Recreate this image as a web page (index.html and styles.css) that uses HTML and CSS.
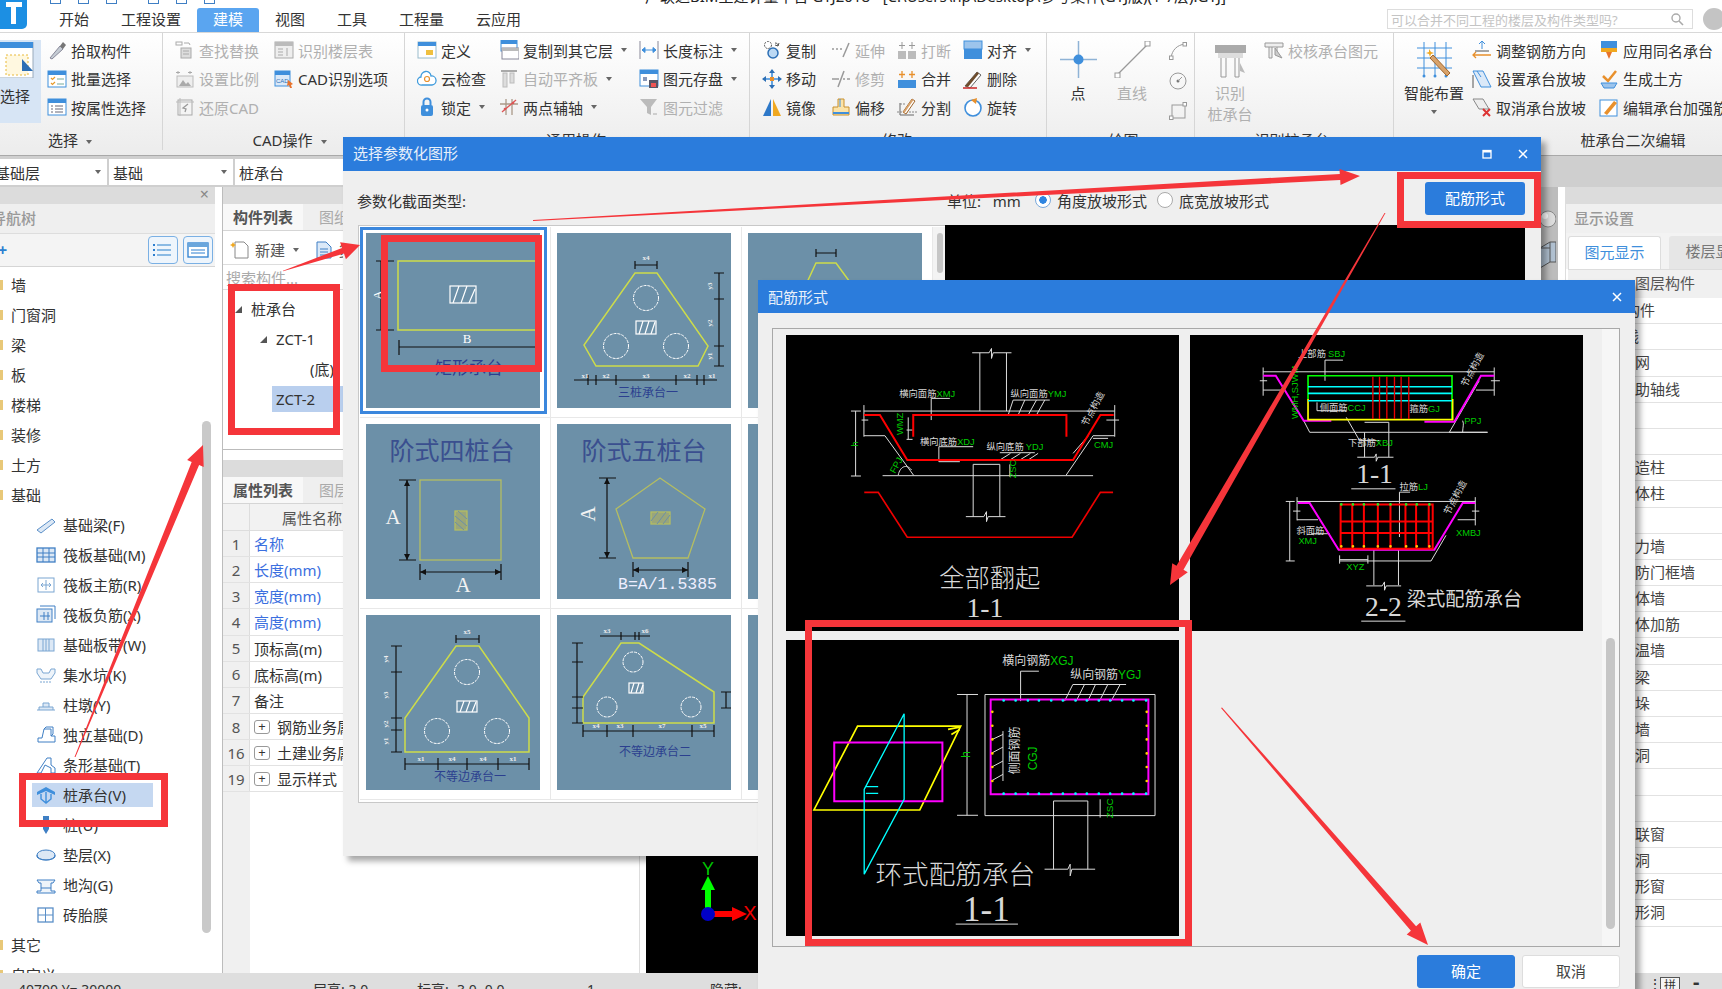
FILE: index.html
```
<!DOCTYPE html>
<html lang="zh">
<head>
<meta charset="utf-8">
<title>广联达BIM土建计量平台</title>
<link rel="stylesheet" href="styles.css">
</head>
<body>
<div class="app">
  <header class="top">
    <div class="logo"><svg viewBox="0 0 27 30" width="27" height="30"><rect x="-4" y="-6" width="31" height="35" rx="5" fill="#1c8fe3"/><path d="M6 2H22V7H16V24H11V7H6Z" fill="#fff"/></svg></div>
    <div class="topright">
      <div class="titlebar">
        <div class="qa"><i></i><i></i><i></i><i class="qa-w"></i><i></i><i></i></div>
        <span class="apptitle">广联达BIM土建计量平台 GTJ2018 - [C:\Users\hp\Desktop\参考案件(GTJ版)(1-7层).GTJ]</span>
      </div>
      <div class="tabbar">
        <nav class="tabs">
          <span class="tab">开始</span><span class="tab">工程设置</span><span class="tab on">建模</span><span class="tab">视图</span><span class="tab">工具</span><span class="tab">工程量</span><span class="tab">云应用</span>
        </nav>
        <div class="searchbox"><span>可以合并不同工程的楼层及构件类型吗?</span><svg viewBox="0 0 14 14" width="14" height="14"><circle cx="6" cy="6" r="4" fill="none" stroke="#aaa" stroke-width="1.4"/><path d="M9 9l4 4" stroke="#aaa" stroke-width="1.6"/></svg></div>
        <div class="avatar"></div>
      </div>
    </div>
  </header>

  <section class="ribbon">
    <div class="group g1">
      <div class="rbody">
        <div class="selbtn">
          <svg viewBox="0 0 34 36" width="34" height="36"><rect x="-3" y="0" width="36" height="36" fill="#fff" stroke="#9ab" stroke-width="1"/><rect x="-3" y="0" width="36" height="6" fill="#3f8fdc"/><rect x="6" y="13" width="22" height="20" fill="#fff8e0" stroke="#e8b93a" stroke-dasharray="2 2"/><path d="M22 17L33 29H22Z" fill="#2d6fb5"/></svg>
          <span>选择</span>
        </div>
        <div class="col w-a">
          <div class="item"><svg class="ic" viewBox="0 0 20 20"><path d="M3 18L13 6l3 3L5 19Z" fill="#c5ccd4" stroke="#889"/><path d="M13 6l3-4 3 3-3 4Z" fill="#777"/></svg><span>拾取构件</span></div>
          <div class="item"><svg class="ic" viewBox="0 0 20 20"><rect x="1" y="2" width="18" height="16" fill="#fff" stroke="#3f8fdc"/><rect x="1" y="2" width="18" height="4" fill="#3f8fdc"/><path d="M4 9l1.500 1.500L8 8M4 14l1.500 1.500L8 13" fill="none" stroke="#e89a2c" stroke-width="1.2"/><path d="M10 10h7M10 15h7" stroke="#7a9" stroke-width="1.2"/></svg><span>批量选择</span></div>
          <div class="item"><svg class="ic" viewBox="0 0 20 20"><rect x="1" y="2" width="18" height="16" fill="#fff" stroke="#3f8fdc"/><rect x="1" y="2" width="18" height="4" fill="#3f8fdc"/><path d="M4 9h2M8 9h8M4 12h2M8 12h8M4 15h2M8 15h8" stroke="#667" stroke-width="1"/></svg><span>按属性选择</span></div>
        </div>
      </div>
      <div class="rlabel l-sel">选择<b class="caret"></b></div>
    </div>

    <div class="group g2">
      <div class="rbody">
        <div class="col w-b off">
          <div class="item"><svg class="ic" viewBox="0 0 20 20"><rect x="1" y="2" width="6" height="3" fill="none" stroke="#aaa"/><path d="M9 3h5l1 2" fill="none" stroke="#aaa"/><rect x="6" y="8" width="10" height="10" fill="#ddd" stroke="#aaa"/><path d="M8 11h6M8 14h6" stroke="#aaa"/></svg><span>查找替换</span></div>
          <div class="item"><svg class="ic" viewBox="0 0 20 20"><path d="M3 2v3M1 3.500h4M15 2v3M13 3.500h4" stroke="#aaa"/><rect x="2" y="7" width="16" height="11" fill="#eee" stroke="#bbb"/><path d="M4 17l4-6 3 4 2-2 3 4Z" fill="#aaa"/></svg><span>设置比例</span></div>
          <div class="item"><svg class="ic" viewBox="0 0 20 20"><rect x="3" y="3" width="14" height="15" fill="#f4f4f4" stroke="#aaa"/><path d="M1 5h18M5 1v18" stroke="#bbb"/><path d="M13 7l-5 4 3 1-1 3" fill="none" stroke="#999" stroke-width="1.300"/></svg><span>还原CAD</span></div>
        </div>
        <div class="col">
          <div class="item off"><svg class="ic" viewBox="0 0 20 20"><rect x="1" y="2" width="18" height="16" fill="#eee" stroke="#aaa"/><rect x="1" y="2" width="18" height="4" fill="#bbb"/><path d="M4 9h5M4 12h5M4 15h5M13 8v8" stroke="#aaa"/></svg><span>识别楼层表</span></div>
          <div class="item"><svg class="ic" viewBox="0 0 20 20"><rect x="1" y="2" width="15" height="15" fill="#dbe9f8" stroke="#3f8fdc"/><rect x="1" y="2" width="15" height="4" fill="#3f8fdc"/><text class="ictext" x="2" y="14">CAD</text><path d="M14 11l5 4-2 1 1 3h-2l-1-3-2 1Z" fill="#e8732c"/></svg><span>CAD识别选项</span></div>
        </div>
      </div>
      <div class="rlabel">CAD操作<b class="caret"></b></div>
    </div>

    <div class="group g3">
      <div class="rbody">
        <div class="col w-c">
          <div class="item"><svg class="ic" viewBox="0 0 20 20"><rect x="1" y="2" width="18" height="16" fill="#fff" stroke="#9bc"/><rect x="1" y="2" width="18" height="4" fill="#3f8fdc"/><rect x="9" y="10" width="7" height="5" fill="#f0c040"/></svg><span>定义</span></div>
          <div class="item"><svg class="ic" viewBox="0 0 20 20"><path d="M5 16a4 4 0 0 1-1-8 5 5 0 0 1 10-1 4.500 4.500 0 0 1 1 9Z" fill="#fff" stroke="#3f9bdc" stroke-width="1.300"/><circle cx="10" cy="10" r="2.500" fill="none" stroke="#e8902c" stroke-width="1.200"/></svg><span>云检查</span></div>
          <div class="item"><svg class="ic" viewBox="0 0 20 20"><rect x="4" y="8" width="12" height="11" rx="2" fill="#3f8fdc"/><path d="M6.500 8V5a3.500 3.500 0 0 1 7 0v3" fill="none" stroke="#3f8fdc" stroke-width="2"/><circle cx="10" cy="13" r="1.500" fill="#fff"/></svg><span>锁定</span><b class="caret"></b></div>
        </div>
        <div class="col w-d">
          <div class="item"><svg class="ic" viewBox="0 0 20 20"><rect x="2" y="0" width="16" height="11" fill="#fff" stroke="#3f8fdc"/><rect x="2" y="0" width="16" height="4" fill="#3f8fdc"/><rect x="3" y="8" width="17" height="11" fill="#fff" stroke="#889"/><rect x="3" y="8" width="17" height="3" fill="#bbb"/></svg><span>复制到其它层</span><b class="caret"></b></div>
          <div class="item off"><svg class="ic" viewBox="0 0 20 20"><path d="M2 2H18" stroke="#aaa" stroke-width="2"/><rect x="4" y="4" width="4" height="14" fill="#ddd" stroke="#bbb"/><rect x="11" y="4" width="4" height="10" fill="#ddd" stroke="#bbb"/></svg><span>自动平齐板</span><b class="caret"></b></div>
          <div class="item"><svg class="ic" viewBox="0 0 20 20"><path d="M7 2V18M13 2V18M1 7H19" stroke="#a98" stroke-width="1.300"/><path d="M3 15L17 3" stroke="#d55" stroke-width="1.300"/><circle cx="6" cy="12" r="1.300" fill="#d55"/><circle cx="14" cy="6" r="1.300" fill="#d55"/></svg><span>两点辅轴</span><b class="caret"></b></div>
        </div>
        <div class="col">
          <div class="item"><svg class="ic" viewBox="0 0 20 20"><path d="M1 1V19M19 1V19" stroke="#889"/><path d="M3 10H17M3 10l3-2.500v5ZM17 10l-3-2.500v5Z" fill="#3f8fdc" stroke="#3f8fdc"/></svg><span>长度标注</span><b class="caret"></b></div>
          <div class="item"><svg class="ic" viewBox="0 0 20 20"><rect x="1" y="1" width="18" height="16" fill="#fff" stroke="#3f8fdc"/><rect x="1" y="1" width="18" height="4" fill="#3f8fdc"/><rect x="4" y="8" width="4" height="4" fill="#89b"/><rect x="10" y="11" width="9" height="8" fill="#556"/><rect x="12" y="14" width="5" height="4" fill="#e55"/></svg><span>图元存盘</span><b class="caret"></b></div>
          <div class="item off"><svg class="ic" viewBox="0 0 20 20"><path d="M1 2H18L12 10V18L8 16V10Z" fill="#bbb"/><path d="M14 17h4" stroke="#aaa"/></svg><span>图元过滤</span></div>
        </div>
      </div>
      <div class="rlabel">通用操作<b class="caret"></b></div>
    </div>

    <div class="group g4">
      <div class="rbody">
        <div class="col w-e">
          <div class="item"><svg class="ic" viewBox="0 0 20 20"><circle cx="6" cy="5" r="3.500" fill="#fff" stroke="#555" stroke-dasharray="2 1"/><circle cx="11" cy="13" r="5" fill="#bcd9f4" stroke="#2d6fb5" stroke-width="1.500"/><path d="M13 3c2 0 3 1 3 3M13 5l3 1 1-3" fill="none" stroke="#555"/></svg><span>复制</span></div>
          <div class="item"><svg class="ic" viewBox="0 0 20 20"><path d="M10 1v18M1 10h18" stroke="#3f8fdc" stroke-width="1.600"/><path d="M10 0l3 4H7ZM10 20l3-4H7ZM0 10l4 3V7ZM20 10l-4 3V7Z" fill="#2d6fb5"/><rect x="8" y="8" width="4" height="4" fill="#e8902c"/></svg><span>移动</span></div>
          <div class="item"><svg class="ic" viewBox="0 0 20 20"><path d="M9 2V19H1Z" fill="#2d78c8"/><path d="M11 2V19H19Z" fill="#f0a820"/></svg><span>镜像</span></div>
        </div>
        <div class="col w-f">
          <div class="item off"><svg class="ic" viewBox="0 0 20 20"><path d="M1 9H3M5 9H7M9 9H11" stroke="#999" stroke-width="1.500"/><path d="M12 17L18 3" stroke="#999" stroke-width="1.500"/></svg><span>延伸</span></div>
          <div class="item off"><svg class="ic" viewBox="0 0 20 20"><path d="M1 10H8M12 10H14M16 10H19" stroke="#999" stroke-width="1.500"/><path d="M7 18L13 2" stroke="#999" stroke-width="1.500"/></svg><span>修剪</span></div>
          <div class="item"><svg class="ic" viewBox="0 0 20 20"><path d="M7 2H13V10H18V18H2V10H7Z" fill="#fbe3a8" stroke="#c8902c"/><path d="M2 16H18" stroke="#3f8fdc" stroke-width="2"/><path d="M9 2V10" stroke="#3f8fdc"/></svg><span>偏移</span></div>
        </div>
        <div class="col w-f">
          <div class="item off"><svg class="ic" viewBox="0 0 20 20"><rect x="1" y="11" width="8" height="8" fill="#bbb"/><rect x="11" y="11" width="8" height="8" fill="#bbb"/><path d="M5 2v7M2 5.500h6M15 2v7M12 5.500h6" stroke="#999"/></svg><span>打断</span></div>
          <div class="item"><svg class="ic" viewBox="0 0 20 20"><rect x="1" y="11" width="18" height="8" fill="#3f8fdc"/><path d="M5 2v7M2 5.500h6M15 2v7M12 5.500h6" stroke="#e8902c" stroke-width="1.300"/></svg><span>合并</span></div>
          <div class="item"><svg class="ic" viewBox="0 0 20 20"><path d="M3 6V18H17" fill="none" stroke="#666"/><path d="M0 15H20M3 7L9 7" stroke="#888" stroke-dasharray="2 1"/><path d="M6 15L15 2l3 2L9 17Z" fill="#fff" stroke="#a0662c"/><path d="M6 15l9-13 1.500 1L7.500 16Z" fill="#d8a26a"/></svg><span>分割</span></div>
        </div>
        <div class="col">
          <div class="item"><svg class="ic" viewBox="0 0 20 20"><rect x="1" y="1" width="18" height="8" fill="#9cc4ec" stroke="#3f8fdc"/><rect x="1" y="9" width="18" height="10" fill="#3f8fdc"/></svg><span>对齐</span><b class="caret"></b></div>
          <div class="item"><svg class="ic" viewBox="0 0 20 20"><path d="M2 17L14 3l4 3L7 19Z" fill="#fff" stroke="#666"/><path d="M2 17l12-14 2 1.500L5 18Z" fill="#6d4c2c"/><path d="M0 19H14" stroke="#c33" stroke-width="1.600"/></svg><span>删除</span></div>
          <div class="item"><svg class="ic" viewBox="0 0 20 20"><circle cx="10" cy="11" r="8" fill="#fff" stroke="#3f8fdc" stroke-width="1.600"/><path d="M8 3l6-2-1 6Z" fill="#e8902c"/></svg><span>旋转</span></div>
        </div>
      </div>
      <div class="rlabel">修改<b class="caret"></b></div>
    </div>

    <div class="group g5">
      <div class="rbody">
        <div class="big">
          <svg viewBox="0 0 37 37" width="37" height="37"><path d="M18.500 0V37M0 18.500H37" stroke="#8fb3d6" stroke-width="1.500"/><circle cx="18.500" cy="18.500" r="5" fill="#3f8fdc"/></svg>
          <span>点</span>
        </div>
        <div class="big off">
          <svg viewBox="0 0 37 37" width="37" height="37"><path d="M3 34L34 3" stroke="#999" stroke-width="1.200"/><rect x="1" y="32" width="5" height="5" fill="#fff" stroke="#999"/><rect x="31" y="0" width="5" height="5" fill="#fff" stroke="#999"/></svg>
          <span>直线</span>
        </div>
        <div class="tools3">
          <svg viewBox="0 0 18 18" width="18" height="18"><path d="M2 16C3 8 8 3 16 2" fill="none" stroke="#999"/><rect x="0.500" y="14" width="3.500" height="3.500" fill="#fff" stroke="#999"/><rect x="14" y="0.500" width="3.500" height="3.500" fill="#fff" stroke="#999"/></svg>
          <svg viewBox="0 0 18 18" width="18" height="18"><circle cx="9" cy="9" r="8" fill="none" stroke="#999"/><circle cx="9" cy="9" r="1.500" fill="#777"/><path d="M9 9l4-4" stroke="#999"/></svg>
          <svg viewBox="0 0 18 18" width="18" height="18"><rect x="3" y="3" width="13" height="13" fill="none" stroke="#999"/><rect x="0.500" y="14" width="3.500" height="3.500" fill="#fff" stroke="#999"/><rect x="14" y="0.500" width="3.500" height="3.500" fill="#fff" stroke="#999"/></svg>
        </div>
      </div>
      <div class="rlabel">绘图</div>
    </div>

    <div class="group g6">
      <div class="rbody">
        <div class="big off wide2">
          <svg viewBox="0 0 37 37" width="37" height="37"><rect x="3" y="4" width="31" height="8" fill="#aaa"/><rect x="6" y="12" width="25" height="5" fill="#ddd"/><path d="M9 17V36H14V17M23 17V36H27V17" fill="none" stroke="#999"/><path d="M28 22l5 10-5-2Z" fill="#bbb"/></svg>
          <span>识别<br>桩承台</span>
        </div>
        <div class="col">
          <div class="item off"><svg class="ic" viewBox="0 0 20 20"><path d="M1 3H19V7H1ZM5 7V18H8V7M13 7V15" fill="#eee" stroke="#999"/><path d="M11 8l7 10-7-3Z" fill="#ccc" stroke="#999"/></svg><span>校核承台图元</span></div>
        </div>
      </div>
      <div class="rlabel">识别桩承台<b class="caret"></b></div>
    </div>

    <div class="group g7">
      <div class="rbody">
        <div class="big wide3">
          <svg viewBox="0 0 37 37" width="37" height="37"><path d="M8 1V35M19 1V35M30 1V35M1 7H36M1 17H36M1 27H36" stroke="#3f8fdc" stroke-width="1"/><circle cx="8" cy="35" r="1.500" fill="#3f8fdc"/><circle cx="19" cy="35" r="1.500" fill="#3f8fdc"/><circle cx="30" cy="35" r="1.500" fill="#3f8fdc"/><path d="M14 17l3-3 17 18-3 3Z" fill="#d8a26a" stroke="#a0662c"/><path d="M13 8l2 3 3 1-3 1-1 3-1-3-3-1 3-1Z" fill="#f0a820"/></svg>
          <span>智能布置</span><b class="caret"></b>
        </div>
        <div class="col w-g">
          <div class="item"><svg class="ic" viewBox="0 0 20 20"><path d="M10 1V9M7 4l3-3 3 3" fill="none" stroke="#3f8fdc"/><path d="M3 11H17" stroke="#888" stroke-width="1.500"/><path d="M1 15H19M4 18l-3-3 3-3" fill="none" stroke="#e8902c" stroke-width="1.300"/></svg><span>调整钢筋方向</span></div>
          <div class="item"><svg class="ic" viewBox="0 0 20 20"><path d="M1 2H11L19 18H9Z" fill="#dbe9f8" stroke="#3f8fdc"/><path d="M5 2L9 8" stroke="#3f8fdc"/><path d="M1 19V6" stroke="#555"/></svg><span>设置承台放坡</span></div>
          <div class="item"><svg class="ic" viewBox="0 0 20 20"><path d="M1 2H11L17 12H7Z" fill="#eee" stroke="#888"/><path d="M11 12l7 7M18 12l-7 7" stroke="#d33" stroke-width="2"/></svg><span>取消承台放坡</span></div>
        </div>
        <div class="col">
          <div class="item"><svg class="ic" viewBox="0 0 20 20"><rect x="2" y="1" width="16" height="7" fill="#3f8fdc"/><rect x="2" y="8" width="16" height="4" fill="#f0a820"/><path d="M7 12h6l-3 7Z" fill="#e8732c"/></svg><span>应用同名承台</span></div>
          <div class="item"><svg class="ic" viewBox="0 0 20 20"><path d="M4 7l5 5 8-10" fill="none" stroke="#e8902c" stroke-width="2.500"/><path d="M2 14H18L15 19H5Z" fill="#9cc4ec" stroke="#3f8fdc"/></svg><span>生成土方</span></div>
          <div class="item"><svg class="ic" viewBox="0 0 20 20"><rect x="1" y="3" width="17" height="16" fill="#fff" stroke="#3f8fdc"/><path d="M5 16L15 4l3 2L8 18Z" fill="#e8902c"/></svg><span>编辑承台加强筋</span></div>
        </div>
      </div>
      <div class="rlabel">桩承台二次编辑</div>
    </div>
  </section>

  <section class="combos">
    <div class="combo c1"><span>基础层</span><b class="caret"></b></div>
    <div class="combo c2"><span>基础</span><b class="caret"></b></div>
    <div class="combo c3"><span>桩承台</span><b class="caret"></b></div>
  </section>

  <main class="main">
    <aside class="nav">
      <div class="strip"><span class="xmark">×</span></div>
      <div class="navtitle"><span>导航树</span></div>
      <div class="navtool">
        <span class="plus">+</span>
        <span class="navbtn"><svg viewBox="0 0 24 18" width="24" height="18"><path d="M6 4H20M6 9H20M6 14H20" stroke="#6aa6dc" stroke-width="1.500"/><path d="M2 4H4M2 9H4M2 14H4" stroke="#2d7fd0" stroke-width="2"/></svg></span>
        <span class="navbtn"><svg viewBox="0 0 24 18" width="24" height="18"><rect x="2" y="2" width="20" height="14" fill="#fff" stroke="#2d7fd0" stroke-width="1.300"/><rect x="2" y="2" width="20" height="4" fill="#6aa6dc"/><path d="M5 9H19M5 12H19" stroke="#2d7fd0"/></svg></span>
      </div>
      <ul class="tree">
        <li class="fold">墙</li>
        <li class="fold">门窗洞</li>
        <li class="fold">梁</li>
        <li class="fold">板</li>
        <li class="fold">楼梯</li>
        <li class="fold">装修</li>
        <li class="fold">土方</li>
        <li class="fold">基础</li>
        <li class="leaf"><svg viewBox="0 0 20 20"><path d="M1 15L16 4l3 3L5 18Z" fill="#dce8f5" stroke="#5a8fc8"/></svg>基础梁(F)</li>
        <li class="leaf"><svg viewBox="0 0 20 20"><rect x="1" y="3" width="18" height="14" fill="#dce8f5" stroke="#3f7fc4" stroke-width="1.300"/><path d="M1 8H19M1 12H19M7 3V17M13 3V17" stroke="#3f7fc4"/></svg>筏板基础(M)</li>
        <li class="leaf"><svg viewBox="0 0 20 20"><rect x="2" y="3" width="16" height="14" fill="#fff" stroke="#7ba6d2"/><path d="M10 5V15M5 10H15M7 8l-2 2 2 2M13 8l2 2-2 2" fill="none" stroke="#7ba6d2"/></svg>筏板主筋(R)</li>
        <li class="leaf"><svg viewBox="0 0 20 20"><rect x="1" y="4" width="15" height="13" fill="#dce8f5" stroke="#3f7fc4"/><path d="M4 1H19V14" fill="none" stroke="#3f7fc4"/><path d="M8 7V15M12 7V15M4 11H14" stroke="#3f7fc4"/></svg>筏板负筋(X)</li>
        <li class="leaf"><svg viewBox="0 0 20 20"><rect x="2" y="4" width="16" height="12" fill="#dce8f5" stroke="#7ba6d2"/><path d="M7 4V16M13 4V16M10 4V16" stroke="#7ba6d2"/></svg>基础板带(W)</li>
        <li class="leaf"><svg viewBox="0 0 20 20"><path d="M1 4H5L7 8H13L15 4H19V8L15 14H5L1 8Z" fill="#eef4fa" stroke="#7ba6d2"/><path d="M4 17H16" stroke="#7ba6d2" stroke-dasharray="2 1"/></svg>集水坑(K)</li>
        <li class="leaf"><svg viewBox="0 0 20 20"><path d="M1 15H19M3 15V12H17V15M7 12V8H13V12" fill="#dce8f5" stroke="#7ba6d2"/></svg>柱墩(Y)</li>
        <li class="leaf"><svg viewBox="0 0 20 20"><path d="M2 17V13H6L8 4H15V11H19V17ZM8 4l2-2H17V9l-2 2" fill="#fff" stroke="#3f7fc4"/></svg>独立基础(D)</li>
        <li class="leaf"><svg viewBox="0 0 20 20"><path d="M1 18L5 12L11 3H15V10L19 13V18H15V13L9 10L5 18Z" fill="#fff" stroke="#3f7fc4"/></svg>条形基础(T)</li>
        <li class="leaf sel"><svg viewBox="0 0 20 20"><path d="M10 2L19 7V10L10 6L1 10V7Z" fill="#3f8fdc"/><path d="M5 9V14L10 18L15 14V9M10 7V18" fill="none" stroke="#3f8fdc" stroke-width="1.400"/></svg>桩承台(V)</li>
        <li class="leaf"><svg viewBox="0 0 20 20"><rect x="7" y="1" width="6" height="13" fill="#3f7fc4"/><path d="M7 14H13L10 19Z" fill="#3f7fc4"/></svg>桩(U)</li>
        <li class="leaf"><svg viewBox="0 0 20 20"><ellipse cx="10" cy="10" rx="9" ry="5" fill="#dce8f5" stroke="#3f7fc4"/><path d="M1 10V12C3 16 17 16 19 12V10" fill="none" stroke="#3f7fc4"/></svg>垫层(X)</li>
        <li class="leaf"><svg viewBox="0 0 20 20"><path d="M1 5H19L17 8H15V16H19V18H1V16H5V8H3Z" fill="#eef4fa" stroke="#3f7fc4"/><path d="M5 13H15" stroke="#3f7fc4"/></svg>地沟(G)</li>
        <li class="leaf"><svg viewBox="0 0 20 20"><rect x="2" y="3" width="15" height="14" fill="#fff" stroke="#5a8fc8" stroke-width="1.300"/><path d="M9.500 3V17M2 10H17" stroke="#5a8fc8"/></svg>砖胎膜</li>
        <li class="fold">其它</li>
        <li class="fold">自定义</li>
      </ul>
      <div class="navscroll"></div>
    </aside>

    <section class="comp">
      <div class="strip"></div>
      <div class="ptabs"><span class="ptab on">构件列表</span><span class="ptab">图纸管理</span></div>
      <div class="comptool">
        <svg viewBox="0 0 20 20" width="20" height="20"><path d="M5 2H14L18 6V18H5Z" fill="#fff" stroke="#888"/><path d="M3 2l1 2 2 1-2 1-1 2-1-2-2-1 2-1Z" fill="#f0a820"/></svg>
        <span>新建</span><b class="caret"></b>
        <svg class="ctool2" viewBox="0 0 20 20" width="20" height="20"><path d="M3 2H12L17 7V18H3Z" fill="#dbe9f8" stroke="#3f7fc4"/><path d="M6 9H14M6 12H14M6 15H14" stroke="#3f7fc4"/></svg>
        <span>复制</span>
      </div>
      <div class="compsearch">搜索构件...</div>
      <div class="comptree">
        <div class="tr lv0"><i class="tri"></i>桩承台</div>
        <div class="tr lv1"><i class="tri"></i>ZCT-1</div>
        <div class="tr lv3">(底)</div>
        <div class="tr lv2 sel">ZCT-2</div>
      </div>
      <div class="gap"></div>
      <div class="strip"></div>
      <div class="ptabs"><span class="ptab on">属性列表</span><span class="ptab">图层管理</span></div>
      <div class="ptable">
        <div class="phead"><span class="pidx"></span><span class="pname ctr">属性名称</span></div>
        <div class="prow"><span class="pidx">1</span><span class="pname blue">名称</span></div>
        <div class="prow"><span class="pidx">2</span><span class="pname blue">长度(mm)</span></div>
        <div class="prow"><span class="pidx">3</span><span class="pname blue">宽度(mm)</span></div>
        <div class="prow"><span class="pidx">4</span><span class="pname blue">高度(mm)</span></div>
        <div class="prow"><span class="pidx">5</span><span class="pname">顶标高(m)</span></div>
        <div class="prow"><span class="pidx">6</span><span class="pname">底标高(m)</span></div>
        <div class="prow"><span class="pidx">7</span><span class="pname">备注</span></div>
        <div class="prow"><span class="pidx">8</span><span class="pname"><i class="pbox">+</i>钢筋业务属性</span></div>
        <div class="prow"><span class="pidx">16</span><span class="pname"><i class="pbox">+</i>土建业务属性</span></div>
        <div class="prow"><span class="pidx">19</span><span class="pname"><i class="pbox">+</i>显示样式</span></div>
      </div>
    </section>

    <section class="viewport">
      <svg class="axes" viewBox="0 0 60 70" width="60" height="70"><path d="M14 48V22" stroke="#0f0" stroke-width="6"/><path d="M14 10L21 24H7Z" fill="#0f0"/><path d="M14 48H42" stroke="#f00" stroke-width="6"/><path d="M53 48L38 41V55Z" fill="#f00"/><circle cx="14" cy="48" r="7" fill="#0000c8"/><text class="ax-y" x="14" y="9">Y</text><text class="ax-x" x="56" y="54">X</text></svg>
    </section>

    <div class="viewtools">
      <svg viewBox="0 0 18 20" width="18" height="20"><circle cx="10" cy="9" r="8" fill="#ddd" stroke="#888"/><circle cx="7" cy="6" r="3" fill="#fff"/></svg>
      <svg viewBox="0 0 18 30" width="18" height="30"><path d="M2 8L12 2V22L2 28ZM2 8H12M12 2H18V22H12" fill="#b0c0d0" stroke="#555"/></svg>
    </div>

    <aside class="right">
      <div class="strip"></div>
      <div class="rtitle">显示设置</div>
      <div class="rtabs"><span class="rtab on">图元显示</span><span class="rtab">楼层显示</span></div>
      <div class="rtable">
        <div class="rhead">图层构件</div>
        <div class="rr l0">所有构件</div>
        <div class="rr l3">轴线</div>
        <div class="rr l2">轴网</div>
        <div class="rr l2">辅助轴线</div>
        <div class="rr l1">柱</div>
        <div class="rr l1">柱</div>
        <div class="rr l2">构造柱</div>
        <div class="rr l2">砌体柱</div>
        <div class="rr l1">墙</div>
        <div class="rr l2">剪力墙</div>
        <div class="rr l2">人防门框墙</div>
        <div class="rr l2">砌体墙</div>
        <div class="rr l2">砌体加筋</div>
        <div class="rr l2">保温墙</div>
        <div class="rr l2">暗梁</div>
        <div class="rr l2">墙垛</div>
        <div class="rr l2">幕墙</div>
        <div class="rr l2">门洞</div>
        <div class="rr l1">门</div>
        <div class="rr l1">窗</div>
        <div class="rr l2">门联窗</div>
        <div class="rr l2">墙洞</div>
        <div class="rr l2">带形窗</div>
        <div class="rr l2">带形洞</div>
      </div>
    </aside>
  </main>

  <footer class="status">
    <span class="s-xy">40700 Y= 30000</span>
    <span class="s-a">层高: 3.0</span>
    <span class="s-b">标高: -3.0~0.0</span>
    <span class="s-c">1</span>
    <span class="s-d">隐藏:</span>
    <span class="s-e">⋮</span>
    <span class="s-f">拼</span>
    <span class="s-g">-</span>
  </footer>

  <div class="dialog d1">
    <div class="dtitle"><span>选择参数化图形</span>
      <svg class="dmax" viewBox="0 0 10 10" width="10" height="10"><rect x="1" y="1.500" width="8" height="7.500" fill="none" stroke="#fff" stroke-width="1.300"/><path d="M1 2.500H9" stroke="#fff" stroke-width="2"/></svg>
      <svg class="dclose" viewBox="0 0 10 10" width="10" height="10"><path d="M1 1L9 9M9 1L1 9" stroke="#fff" stroke-width="1.500"/></svg>
    </div>
    <div class="d1head">
      <span class="d1label">参数化截面类型:</span>
      <span class="unit">单位: &nbsp;&nbsp;mm</span>
      <i class="radio on"></i><span>角度放坡形式</span>
      <i class="radio r2"></i><span>底宽放坡形式</span>
      <span class="pbtn">配筋形式</span>
    </div>
    <div class="d1body">
      <div class="gridframe">
        <div class="grid">
          <div class="cell sel"><svg class="thumb" viewBox="0 0 174 175">
            <path class="dim" d="M15 28V97M10 28H28M10 97H28M33 114H170M33 107V122"/>
            <rect class="yl" x="32" y="28" width="138" height="69"/>
            <g transform="translate(84 53)"><rect class="hw" width="26" height="17"/><path class="hw" d="M3 17L9 0M11 17L17 0M19 17L25 3"/></g>
            <text class="lw m" x="12" y="66" transform="rotate(-90 12 62)">A</text>
            <text class="lw m" x="101" y="110">B</text>
            <text class="tt m t17" x="103" y="141">矩形承台</text>
          </svg></div>
          <div class="cell"><svg class="thumb" viewBox="0 0 174 175">
            <polygon class="yl" points="78,40 100,40 151,113 141,133 39,133 27,112"/>
            <circle class="wc" cx="89" cy="65" r="12.500"/><circle class="wc" cx="59" cy="113" r="12.500"/><circle class="wc" cx="119" cy="113" r="12.500"/>
            <g transform="translate(79 88)"><rect class="hw" width="20" height="13"/><path class="hw" d="M3 13L7 0M9 13L13 0M15 13L19 1"/></g>
            <path class="dim" d="M78 32H100M78 28V36M100 28V36M162 40V133M157 40H167M157 66H167M157 113H167M157 133H167M17 147H160M31 142V152M39 142V152M59 142V152M119 142V152M140 142V152M147 142V152"/>
            <text class="mini m" x="89" y="27">x4</text><text class="mini m" x="28" y="145">x1</text><text class="mini m" x="49" y="145">x2</text><text class="mini m" x="89" y="145">x3</text><text class="mini m" x="130" y="145">x2</text><text class="mini m" x="155" y="145">x1</text>
            <text class="mini m" x="153" y="55" transform="rotate(-90 153 53)">y3</text><text class="mini m" x="153" y="92" transform="rotate(-90 153 90)">y2</text><text class="mini m" x="153" y="125" transform="rotate(-90 153 123)">y1</text>
            <text class="tt m t12" x="91" y="164">三桩承台一</text>
          </svg></div>
          <div class="cell"><svg class="thumb" viewBox="0 0 174 175">
            <polygon class="yl" points="68,30 88,30 148,112 148,133 30,133 30,112"/>
            <path class="dim" d="M68 20H88M68 16V24M88 16V24"/>
          </svg></div>
          <div class="cell"><svg class="thumb" viewBox="0 0 174 175">
            <text class="tt2 m" x="86" y="36">阶式四桩台</text>
            <rect class="ym" x="54" y="56" width="81" height="80"/>
            <g transform="translate(89 87)"><rect class="ym fy" width="12" height="19"/><path class="hy" d="M0 5L12 15M0 11L9 19M3 0L12 8"/></g>
            <path class="dim" d="M41 56V136M33 56H50M33 136H50M54 148H135M54 140V156M135 140V156"/>
            <path class="ah" d="M41 56l-3 6h6ZM41 136l-3-6h6ZM54 148l6-3v6ZM135 148l-6-3v6Z"/>
            <text class="lw2 m" x="27" y="100">A</text><text class="lw2 m" x="97" y="168">A</text>
          </svg></div>
          <div class="cell"><svg class="thumb" viewBox="0 0 174 175">
            <text class="tt2 m" x="87" y="36">阶式五桩台</text>
            <polygon class="ym" points="103,54 148,85 131,134 76,134 59,85"/>
            <g transform="translate(94 88)"><rect class="ym fy" width="19" height="12"/><path class="hy" d="M0 9L7 0M6 12L15 0M12 12L19 3"/></g>
            <path class="dim" d="M50 54V134M42 54H59M42 134H59M76 146H131M76 138V153M131 138V153"/>
            <path class="ah" d="M50 54l-3 6h6ZM50 134l-3-6h6ZM76 146l6-3v6ZM131 146l-6-3v6Z"/>
            <text class="lw2 m" x="32" y="96" transform="rotate(-90 32 90)">A</text>
            <text class="mono" x="61" y="165">B=A/1.5385</text>
          </svg></div>
          <div class="cell"><svg class="thumb"></svg></div>
          <div class="cell"><svg class="thumb" viewBox="0 0 174 175">
            <polygon class="yl" points="90,31 113,31 163,103 163,137 39,137 39,103"/>
            <circle class="wc" cx="101" cy="57" r="12.500"/><circle class="wc" cx="71" cy="116" r="12.500"/><circle class="wc" cx="131" cy="116" r="12.500"/>
            <g transform="translate(91 86)"><rect class="hw" width="20" height="11"/><path class="hw" d="M3 11L7 0M9 11L13 0M15 11L19 1"/></g>
            <path class="dim" d="M90 24H113M90 20V28M113 20V28M30 31V137M25 31H36M25 57H36M25 103H36M25 115H36M25 137H36M39 149H163M39 143V155M72 143V155M101 143V155M132 143V155M163 143V155"/>
            <text class="mini m" x="101" y="19">x5</text><text class="mini m" x="55" y="146">x1</text><text class="mini m" x="86" y="146">x4</text><text class="mini m" x="117" y="146">x4</text><text class="mini m" x="147" y="146">x1</text>
            <text class="mini m" x="20" y="46" transform="rotate(-90 20 44)">y4</text><text class="mini m" x="20" y="82" transform="rotate(-90 20 80)">y3</text><text class="mini m" x="20" y="111" transform="rotate(-90 20 109)">y2</text><text class="mini m" x="20" y="128" transform="rotate(-90 20 126)">y1</text>
            <text class="tt m t12" x="104" y="166">不等边承台一</text>
          </svg></div>
          <div class="cell"><svg class="thumb" viewBox="0 0 174 175">
            <polygon class="yl" points="64,28 82,28 157,77 157,108 26,108 26,82"/>
            <circle class="wc" cx="76" cy="47" r="10"/><circle class="wc" cx="50" cy="92" r="10"/><circle class="wc" cx="134" cy="92" r="10"/>
            <g transform="translate(72 68)"><rect class="hw" width="14" height="10"/><path class="hw" d="M2 10L5 0M7 10L10 0M11 10L14 2"/></g>
            <path class="dim" d="M43 21H93M64 17V25M78 17V25M82 17V25M20 28V108M15 28H26M15 47H26M15 82H26M15 93H26M15 108H26M26 116H157M26 110V122M50 110V122M76 110V122M135 110V122M157 110V122M169 77V93M164 77H174M164 93H174"/>
            <text class="mini m" x="50" y="18">x3</text><text class="mini m" x="88" y="18">x6</text><text class="mini m" x="39" y="113">x4</text><text class="mini m" x="63" y="113">x3</text><text class="mini m" x="105" y="113">x7</text><text class="mini m" x="146" y="113">x5</text>
            <text class="tt m t12" x="98" y="141">不等边承台二</text>
          </svg></div>
          <div class="cell"><svg class="thumb"></svg></div>
        </div>
        <div class="gscroll"><i></i></div>
      </div>
      <div class="preview"></div>
    </div>
  </div>

  <div class="dialog d2">
    <div class="dtitle"><span>配筋形式</span>
      <svg class="dclose2" viewBox="0 0 10 10" width="10" height="10"><path d="M1 1L9 9M9 1L1 9" stroke="#fff" stroke-width="1.500"/></svg>
    </div>
    <div class="d2frame">
      <div class="imgs">
        <svg class="cad" viewBox="78 165 1180 888">
          <path class="wl" d="M312 375V470M1065 375V470M312 393H1065M287 393V588M273 393H303M273 588H303M660 393V218M740 393V218M637 218H688L695 205V235L700 218H755M312 467H375L462 587H368M1065 467H1000L918 587H1000M462 587H918M640 587V553H720V710M640 587V710M618 710H672L680 695V725L685 710H737M750 553V590M440 450H458M440 478H458M445 412V478M514 355V420M537 500V545H600M514 355H570M537 500H640M760 360L745 405M795 360L775 405M830 360L805 405M855 360L830 405M760 360H870M752 520L720 540M782 520L750 540M812 520L780 540M835 520L805 540M720 518H825M1000 475H1045M415 585C420 560 440 550 455 570M985 468L940 520M1040 420H1078M305 420H325"/>
          <path class="rl" d="M312 405H360L442 540H940L1022 405H1062"/>
          <path class="rl" d="M460 470V405H920V470"/>
          <path class="rl2" d="M313 637H355L442 772H937L1022 637H1060"/>
          <text class="cw s26" x="418" y="350">横向面筋<tspan class="cg">XMJ</tspan></text>
          <text class="cw s26" x="752" y="352">纵向面筋<tspan class="cg">YMJ</tspan></text>
          <text class="cw s26" x="480" y="495">横向底筋<tspan class="cg">XDJ</tspan></text>
          <text class="cw s26" x="680" y="510">纵向底筋 <tspan class="cg">YDJ</tspan></text>
          <text class="cg s26" x="1003" y="505">CMJ</text>
          <text class="cg s26" x="428" y="465" transform="rotate(-90 428 465)">WMZ</text>
          <text class="cg s26" x="770" y="595" transform="rotate(-90 770 595)">ZSC</text>
          <text class="cg s26" x="405" y="582" transform="rotate(-60 405 582)">FPJ</text>
          <text class="cg s26" x="295" y="500" transform="rotate(-90 295 500)">h</text>
          <text class="cw s26" x="982" y="440" transform="rotate(-62 982 440)">节点构造</text>
          <text class="cw big75 m" x="690" y="920">全部翻起</text>
          <text class="cw one m" x="675" y="1010">1-1</text>
        </svg>
        <svg class="cad" viewBox="30 45 1182 885">
          <path class="wl" d="M250 153H945M250 140V225M945 140V225M240 180H262M935 180H962M250 208H305M945 208H890M390 335H925M390 335L372 300M925 335H810L900 180M555 335V410M628 305V410M555 305H628M533 410H585L590 400V422L595 410H642M515 505H648M436 118V180M436 118H490M412 270V245M412 270H500M500 290L540 360H600M850 300C855 310 850 320 850 335M352 543H888M352 530V600M888 530V615M340 572H362M878 572H900M352 598H415M888 598H835M330 543V722M318 543H345M318 722H345M480 722H755L800 645M480 705V730M565 705V730M480 718H565M583 688V795M657 688V795M583 688H657M560 797H608L615 785V810L620 797H665M545 903H678M660 515V650M660 515H692M395 640H450"/>
          <path class="ml" d="M250 165H288L372 300H455M735 303H825L905 165H945"/>
          <path class="gl" d="M385 235V165H818V298M385 235"/>
          <path class="yl2" d="M385 235V297H820V235"/>
          <path class="cl" d="M385 198H818M385 218H818M385 240H818"/>
          <path class="rl3" d="M580 168V295M600 168V295M622 168V295M645 168V295M665 168V295M688 168V295"/>
          <path class="ml" d="M355 548H390L477 688H765L850 548H888"/>
          <path class="rl" d="M483 552H760V685H483ZM518 552V685M553 552V685M595 552V685M633 552V685M678 552V685M710 552V685M748 552V685M483 603H760M483 638H760"/>
          <path class="dots-y" d="M485 678h.1M520 678h.1M553 678h.1M595 678h.1M633 678h.1M680 678h.1M712 678h.1M750 678h.1"/>
          <path class="dots-g" d="M485 552h.1M520 552h.1M553 552h.1M595 552h.1M633 552h.1M680 552h.1M712 552h.1M750 552h.1"/>
          <text class="cw s26" x="355" y="110">上部筋 <tspan class="cg">SBJ</tspan></text>
          <text class="cw s26" x="420" y="270">侧面筋<tspan class="cg">CCJ</tspan></text>
          <text class="cw s26" x="690" y="275">箍筋<tspan class="cg">GJ</tspan></text>
          <text class="cg s26" x="855" y="310">PPJ</text>
          <text class="cw s26" x="505" y="376">下部筋<tspan class="cg">XBJ</tspan></text>
          <text class="cw s26" x="660" y="510">拉筋<tspan class="cg">LJ</tspan></text>
          <text class="cw s26" x="350" y="640">斜面筋</text>
          <text class="cg s26" x="356" y="670">XMJ</text>
          <text class="cg s26" x="830" y="646">XMBJ</text>
          <text class="cg s26" x="500" y="748">XYZ</text>
          <text class="cg s26" x="355" y="295" transform="rotate(-90 355 295)">WMH,SJWM</text>
          <text class="cw s26" x="862" y="200" transform="rotate(-62 862 200)">节点构造</text>
          <text class="cw s26" x="810" y="585" transform="rotate(-62 810 585)">节点构造</text>
          <text class="cw one m" x="585" y="488">1-1</text>
          <text class="cw one m" x="612" y="887">2-2</text>
          <text class="cw s56" x="682" y="856">梁式配筋承台</text>
        </svg>
        <svg class="cad" viewBox="78 60 1181 882">
          <path class="yl3" d="M293 315H603L480 567H162Z"/>
          <path class="ml" d="M223 364H548V541H223Z"/>
          <path class="cl2" d="M433 278V535L313 760V505ZM318 497H355M318 517H355"/>
          <path class="yl3" d="M565 325L600 318M575 340L600 325"/>
          <path class="wl" d="M676 220H1187V584H676ZM622 220V583M592 220H655M592 583H655M882 584V540H985V745M882 584V745M855 745H925L932 730V765L937 745H1007M783 150V240M783 150H838M915 240L940 190M950 240L975 190M985 240L1008 190M1020 240L1045 190M1055 240L1082 190M940 190H1100M730 330V480M698 355L730 340M698 395L730 378M698 437L730 420M698 478L730 460M1022 535V590M588 910H775"/>
          <path class="ml" d="M693 235H1167V520H693Z"/>
          <path class="dots-c" d="M732 238h.1M768 238h.1M805 238h.1M838 238h.1M875 238h.1M910 238h.1M948 238h.1M982 238h.1M1018 238h.1M1052 238h.1M1088 238h.1M1122 238h.1M1160 238h.1M732 518h.1M768 518h.1M805 518h.1M838 518h.1M875 518h.1M910 518h.1M948 518h.1M982 518h.1M1018 518h.1M1052 518h.1M1088 518h.1M1122 518h.1M1160 518h.1"/>
          <path class="dots-y" d="M698 272h.1M698 314h.1M698 355h.1M698 397h.1M698 438h.1M698 480h.1M1162 272h.1M1162 314h.1M1162 355h.1M1162 397h.1M1162 438h.1M1162 480h.1"/>
          <text class="cw s36" x="728" y="130">横向钢筋<tspan class="cg">XGJ</tspan></text>
          <text class="cw s36" x="932" y="172">纵向钢筋<tspan class="cg">YGJ</tspan></text>
          <text class="cw s36" x="778" y="460" transform="rotate(-90 778 460)">侧面钢筋</text>
          <text class="cg s36" x="832" y="448" transform="rotate(-90 832 448)">CGJ</text>
          <text class="cg s30" x="1062" y="592" transform="rotate(-90 1062 592)">ZSC</text>
          <text class="cg s36" x="632" y="410" transform="rotate(-90 632 410)">h</text>
          <text class="cw s81" x="347" y="789">环式配筋承台</text>
          <text class="cw one2 m" x="680" y="900">1-1</text>
        </svg>
      </div>
      <div class="d2scroll"><i></i></div>
    </div>
    <div class="d2foot">
      <span class="btn pri">确定</span>
      <span class="btn">取消</span>
    </div>
  </div>

  <div class="rbox rb1"></div>
  <div class="rbox rb2"></div>
  <div class="rbox rb3"></div>
  <div class="rbox rb4"></div>
  <div class="rbox rb5"></div>

  <svg class="arrows" viewBox="0 0 1722 989" width="1722" height="989">
    <polygon points="75.500,757 199.100,465 203.700,466.900 203,445 187.100,460.100 191.700,462 74.500,757"/>
    <polygon points="283,271.300 344,253.600 345.900,259.300 360,245 340.100,242.300 342,248 283,270.700"/>
    <polygon points="533,221 1340.200,180 1340.500,185 1360,176 1339.500,169 1339.800,174 533,220"/>
    <polygon points="1385.500,213 1183.500,569.700 1187.800,572.200 1170,585 1172.200,563.200 1176.500,565.700 1384.500,213"/>
    <polygon points="1221,708 1410.900,930.800 1406.700,934.400 1428,945 1420.300,922.600 1416.100,926.200 1222,707.500"/>
  </svg>
</div>
</body>
</html>
```

FILE: styles.css
```
* { box-sizing: border-box; }
html, body { margin: 0; padding: 0; }
body { width: 1722px; height: 989px; overflow: hidden; background: #eee; font-family: "Noto Sans", "Noto Sans CJK SC", sans-serif; font-size: 15px; color: #333; }
ul { list-style: none; margin: 0; padding: 0; }
i, b { font-style: normal; font-weight: normal; }

.app { position: relative; width: 1722px; height: 989px; overflow: hidden; display: flex; flex-direction: column; }

.top { display: flex; height: 33px; background: #fff; border-bottom: 1px solid #d8d8d8; flex: none; }
.logo { width: 43px; flex: none; }
.logo svg { display: block; }
.topright { flex: 1; display: flex; flex-direction: column; }
.titlebar { height: 9px; overflow: hidden; display: flex; align-items: flex-end; position: relative; }
.qa { display: flex; gap: 17px; margin-left: 7px; height: 4px; align-self: flex-start; }
.qa i { width: 11px; height: 4px; border: 1px solid #3f7fc4; border-top: 0; }
.qa .qa-w { margin-left: 14px; }
.apptitle { position: absolute; left: 602px; top: -14px; font-size: 15px; line-height: 20px; white-space: nowrap; color: #222; }
.tabbar { flex: 1; display: flex; align-items: stretch; }
.tabs { display: flex; flex: none; }
.tab { padding: 0 16px; line-height: 23px; font-size: 15px; white-space: nowrap; }
.tab.on { background: #5aa5f0; color: #fff; border-radius: 3px 3px 0 0; }
.searchbox { margin: 1px 0 3px auto; width: 306px; height: 20px; border: 1px solid #ddd; display: flex; align-items: center; justify-content: space-between; padding: 0 8px 0 3px; font-size: 13px; color: #c4c4c4; background: #fff; }
.avatar { width: 22px; height: 22px; margin: 0 -3px 0 10px; border-radius: 50%; background: #c4c4c4; }

.ribbon { flex: none; height: 122px; display: flex; overflow: hidden; background: linear-gradient(#fff, #ececec); }
.group { flex: none; display: flex; flex-direction: column; border-right: 1px solid #d6d6d6; height: 117px; }
.g1 { width: 163px; }
.g2 { width: 242px; padding-left: 12px; }
.g3 { width: 345px; padding-left: 12px; }
.g4 { width: 297px; padding-left: 12px; }
.g5 { width: 148px; padding-left: 6px; }
.g6 { width: 199px; padding-left: 10px; }
.g7 { width: 468px; padding-left: 10px; border-right: 0; }
.rbody { height: 97px; flex: none; padding-top: 3px; display: flex; }
.rlabel { height: 20px; text-align: center; line-height: 20px; color: #333; font-size: 15px; }
.l-sel { padding-right: 22px; }
.col { flex: none; display: flex; flex-direction: column; }
.w-a { margin-left: 6px; }
.w-b { width: 99px; }
.w-c { width: 82px; }
.w-d { width: 140px; }
.w-e { width: 69px; }
.w-f { width: 66px; }
.w-g { width: 127px; }
.item { height: 28.6px; display: flex; align-items: center; white-space: nowrap; font-size: 15px; }
.ic { width: 20px; height: 20px; margin-right: 4px; flex: none; }
.ictext { font-size: 6px; fill: #2d6fb5; font-family: "Liberation Sans", sans-serif; }
.off span { color: #b0b0b0; }
.caret { display: inline-block; width: 0; height: 0; margin-left: 8px; border: 3.5px solid transparent; border-top: 4px solid #666; border-bottom: 0; vertical-align: middle; }
.selbtn { width: 41px; height: 83px; margin-top: 4px; background: #d7e5f5; display: flex; flex-direction: column; gap: 7px; overflow: hidden; }
.selbtn svg { display: block; margin-top: 2px; }
.big { width: 50px; display: flex; flex-direction: column; align-items: center; flex: none; margin-right: 4px; font-size: 15px; }
.big svg { margin-top: 5px; margin-bottom: 5px; }
.big span { line-height: 21px; text-align: center; }
.wide2 { width: 50px; margin-right: 9px; }
.wide3 { width: 60px; margin-right: 8px; }
.wide3 .caret { margin: 6px 0 0; }
.tools3 { margin: 0 0 0 8px; display: flex; flex-direction: column; gap: 12px; padding-top: 6px; }

.combos { flex: none; height: 32px; background: #cfcfcf; border-top: 1px solid #a9a9a9; display: flex; gap: 2px; padding-top: 3px; margin-top: 0; overflow: hidden; }
.combo { height: 26px; background: #fff; display: flex; align-items: center; justify-content: space-between; padding: 0 6px 0 4px; font-size: 15px; flex: none; }
.c1 { width: 107px; padding-left: 0; }
.c1 span { margin-left: -5px; }
.c2 { width: 124px; }
.c3 { width: 300px; }
.combo .caret { margin: 0; }

.main { flex: 1; display: flex; background: #fff; min-height: 0; }
.strip { height: 17px; background: #dcdcdc; flex: none; position: relative; }
.nav { width: 215px; flex: none; display: flex; flex-direction: column; position: relative; background: #fff; }
.xmark { position: absolute; right: 6px; top: -3px; color: #888; font-size: 16px; line-height: 20px; }
.navtitle { height: 29px; flex: none; background: #efefef; color: #999; font-weight: 500; padding-left: 0; line-height: 29px; overflow: hidden; }
.navtitle span { margin-left: -9px; }
.navtool { height: 34px; flex: none; background: #f4f4f4; border-top: 1px solid #ddd; border-bottom: 1px solid #d5d5d5; display: flex; align-items: center; padding-right: 2px; gap: 5px; }
.plus { margin-right: auto; color: #2d7fd0; font-weight: 700; font-size: 16px; line-height: 16px; margin-left: -2px; }
.navbtn { width: 30px; height: 28px; border: 1.500px solid #7ab0e4; border-radius: 4px; display: flex; align-items: center; justify-content: center; background: #eef5fc; }
.tree { padding-top: 3px; flex: 1; overflow: hidden; }
.tree li { height: 30px; line-height: 30px; font-size: 15px; white-space: nowrap; display: flex; align-items: center; }
.fold { padding-left: 11px; position: relative; }
.fold::before { content: ""; position: absolute; left: 0; top: 10px; width: 3px; height: 10px; background: #e8c878; }
.leaf { padding-left: 63px; position: relative; }
.leaf svg { position: absolute; left: 36px; top: 5px; width: 20px; height: 20px; }
.tree .leaf.sel { background: linear-gradient(#c5d8f1, #c5d8f1) 32px 3px / 121px 24px no-repeat; }
.navscroll { position: absolute; left: 202px; top: 234px; width: 9px; height: 512px; background: #c9c9c9; border-radius: 5px; }

.comp { width: 418px; flex: none; margin-left: 7px; border-left: 1px solid #bcbcbc; border-right: 1px solid #ddd; display: flex; flex-direction: column; background: #fff; }
.ptabs { height: 27px; flex: none; background: #efefef; display: flex; border-bottom: 1px solid #d5d5d5; }
.ptab { width: 80px; flex: none; text-align: center; line-height: 27px; font-size: 15px; color: #aaa; margin-right: 6px; }
.ptab.on { background: #f8f8f8; color: #555; font-weight: 700; margin-right: 6px; }
.comptool { height: 34px; flex: none; display: flex; align-items: center; padding: 4px 0 0 7px; border-bottom: 1px solid #ddd; gap: 5px; font-size: 15px; color: #555; }
.comptool .caret { margin-left: 3px; }
.ctool2 { margin-left: 10px; }
.compsearch { height: 25px; flex: none; padding: 2px 0 0 3px; color: #aaa; font-size: 15px; line-height: 23px; border-bottom: 1px solid #ddd; }
.comptree { height: 160px; flex: none; padding-top: 4px; border-bottom: 1px solid #bbb; }
.tr { height: 30px; line-height: 30px; position: relative; white-space: nowrap; font-size: 15px; }
.lv0 { padding-left: 28px; }
.lv1 { padding-left: 53px; }
.lv3 { padding-left: 87px; }
.lv2 { margin-left: 49px; padding-left: 4px; background: #b9cfee; height: 26px; line-height: 26px; margin-top: 2px; }
.tri { position: absolute; width: 0; height: 0; top: 12px; border-style: solid; border-width: 0 0 7px 7px; border-color: transparent transparent #555 transparent; }
.lv0 .tri { left: 12px; }
.lv1 .tri { left: 37px; }
.gap { height: 10px; flex: none; }
.ptable { flex: 1; background: linear-gradient(to right, #f0f0f0 27px, #fff 27px); overflow: hidden; }
.phead { height: 27px; display: flex; border-bottom: 1px solid #ddd; background: #f2f2f2; align-items: center; }
.prow { height: 26.15px; display: flex; align-items: center; border-bottom: 1px solid #e2e2e2; }
.pidx { width: 27px; flex: none; text-align: center; font-size: 15px; color: #555; align-self: stretch; display: flex; align-items: center; justify-content: center; border-right: 1px solid #ddd; }
.pname { width: 150px; flex: none; padding-left: 4px; font-size: 15px; white-space: nowrap; display: flex; align-items: center; }
.ctr { width: 124px; justify-content: center; color: #555; padding: 0; }
.blue { color: #3b6fe0; }
.pbox { width: 16px; height: 14px; border: 1px solid #999; border-radius: 3px; font-size: 13px; line-height: 11px; text-align: center; margin-right: 7px; color: #333; }

.viewport { width: 912px; flex: none; margin-left: 6px; background: #000; position: relative; }
.axes { position: absolute; left: 48px; bottom: 37px; overflow: visible; }
.ax-y { fill: #0c0; font: 18px "Liberation Sans", sans-serif; text-anchor: middle; }
.ax-x { fill: #e00; font: 20px "Liberation Sans", sans-serif; text-anchor: middle; }
.viewtools { width: 7px; flex: none; background: #fff; position: relative; }
.viewtools svg { position: absolute; left: -20px; }
.viewtools svg:first-child { top: 23px; }
.viewtools svg:last-child { top: 53px; }
.viewport::after { content: ""; position: absolute; right: 0; top: 0; width: 18px; height: 100%; background: #bcbcbc; }

.right { flex: 1; display: flex; flex-direction: column; background: #fff; border-left: 1px solid #ddd; }
.rtitle { height: 29px; flex: none; background: #f0f0f0; color: #999; font-weight: 500; padding-left: 8px; line-height: 29px; font-size: 15px; }
.rtabs { height: 36px; flex: none; display: flex; background: #f3f3f3; padding-top: 3px; padding-left: 2px; gap: 8px; }
.rtab { width: 93px; flex: none; text-align: center; font-size: 15px; line-height: 30px; color: #777; background: #e6e6e6; border-radius: 3px 3px 0 0; }
.rtab.on { background: #fff; color: #3f8fdc; border: 1px solid #ddd; border-bottom: 0; }
.rtable { flex: 1; border-top: 1px solid #ddd; margin: 0 0 0 2px; }
.rhead { height: 28px; background: #f0f0f0; text-align: center; line-height: 27px; font-size: 15px; color: #555; padding-left: 0; }
.rr { height: 26.2px; line-height: 25px; font-size: 15px; border-bottom: 1px solid #e2e2e2; white-space: nowrap; color: #444; }
.l0 { padding-left: 27px; }
.l1 { padding-left: 37px; }
.l2 { padding-left: 52px; }
.l3 { padding-left: 41px; }

.status { flex: none; height: 16px; background: #dedede; position: relative; overflow: hidden; font-size: 14px; color: #333; }
.status span { position: absolute; top: 8px; line-height: 18px; white-space: nowrap; }
.s-xy { left: 18px; }
.s-a { left: 313px; }
.s-b { left: 417px; }
.s-c { left: 587px; }
.s-d { left: 710px; }
.s-e { left: 1648px; top: 2px !important; }
.s-f { left: 1660px; top: 4px !important; width: 20px; height: 20px; border: 1px solid #555; text-align: center; font-size: 12px; line-height: 16px !important; background: #f4f4f4; }
.s-g { left: 1693px; top: 0 !important; font-size: 20px; font-weight: 700; }

.dialog { position: absolute; background: #efefef; box-shadow: 5px 5px 6px rgba(0,0,0,.35); display: flex; flex-direction: column; }
.dtitle { flex: none; background: #2b7cdc; color: #e8f0fa; font-size: 15px; display: flex; align-items: center; position: relative; padding-left: 10px; }
.d1 { left: 343px; top: 137px; width: 1198px; height: 719px; }
.d1 .dtitle { height: 34px; padding-bottom: 4px; }
.dmax { position: absolute; right: 49px; top: 12px; }
.dclose { position: absolute; right: 13px; top: 12px; }
.d1head { height: 54px; flex: none; display: flex; align-items: center; font-size: 15px; white-space: nowrap; color: #333; padding: 4px 0 0 14px; }
.d1label { width: 590px; }
.unit { width: 88px; }
.radio { width: 16px; height: 16px; border-radius: 50%; border: 1px solid #aaa; background: #fff; flex: none; margin-right: 6px; }
.radio.on { background: radial-gradient(circle, #2f85e0 0 3.500px, #fff 4px); border-color: #7aa9dc; }
.r2 { margin-left: 10px; }
.pbtn { margin-left: 156px; width: 100px; height: 33px; border-radius: 3px; background: #2b7cdc; color: #fff; text-align: center; line-height: 33px; font-size: 15px; margin-top: -4px; }
.d1body { display: flex; padding-left: 15px; }
.gridframe { width: 587px; height: 578px; border: 1px solid #c8c8c8; border-right: 0; background: #fff; display: flex; padding: 1px 0 0 1px; }
.grid { width: 573px; flex: none; display: grid; grid-template-columns: repeat(3, 191px); grid-auto-rows: 191px; }
.cell { padding: 6px 0 0 6px; border-right: 1px solid #e8e8e8; border-bottom: 1px solid #e8e8e8; position: relative; }
.cell.sel::before { content: ""; position: absolute; left: 0; top: 0; right: 3px; bottom: 3px; border: 3px solid #3b87dd; }
.thumb { display: block; width: 174px; height: 175px; background: #6c90a8; }
.gscroll { flex: 1; background: #f3f3f3; padding: 6px 2px 0 4px; }
.gscroll i { display: block; height: 40px; background: #c6c6c6; border-radius: 3px; }
.preview { width: 580px; height: 578px; background: #000; }

.dim { stroke: #111; stroke-width: 1.200; fill: none; }
.yl { stroke: #cddc4a; stroke-width: 1.500; fill: none; }
.ym { stroke: #b4bd62; stroke-width: 1.300; fill: none; }
.fy { fill: #9aa67a; }
.hy { stroke: #6c90a8; stroke-width: 1; fill: none; }
.ah { fill: #111; }
.wc { stroke: #fff; stroke-width: 1; stroke-dasharray: 3 1; fill: none; }
.hw { stroke: #fff; stroke-width: 1.200; fill: none; }
.m { text-anchor: middle; }
.lw { fill: #fff; font: 13px "Liberation Serif", serif; }
.lw2 { fill: #f2f2f2; font: 21px "Liberation Serif", serif; }
.mini { fill: #eee; font: bold 7px "Liberation Serif", serif; }
.tt { fill: #2b3f8f; font-family: "Noto Sans CJK SC", sans-serif; }
.t17 { font-size: 17px; }
.t12 { font-size: 12px; }
.tt2 { fill: #3a4f8f; font: 25px "Noto Sans CJK SC", sans-serif; }
.mono { fill: #eef; font: 16.500px "Liberation Mono", monospace; }

.d2 { left: 758px; top: 280px; width: 877px; height: 730px; }
.d2 .dtitle { height: 33px; }
.dclose2 { position: absolute; right: 13px; top: 12px; }
.d2frame { flex: none; margin: 15px 0 0 14px; width: 848px; height: 619px; border: 1px solid #a8a8a8; display: flex; }
.imgs { width: 829px; flex: none; padding: 6px 0 0 13px; display: grid; grid-template-columns: 393px 393px; grid-auto-rows: 296px; column-gap: 11px; row-gap: 9px; align-content: start; }
.cad { display: block; width: 393px; height: 296px; background: #000; }
.d2scroll { flex: 1; background: #f6f6f6; padding: 309px 4px 0 4px; }
.d2scroll i { display: block; height: 291px; background: #c6c6c6; border-radius: 5px; }
.d2foot { flex: none; display: flex; justify-content: flex-end; gap: 7px; padding: 8px 15px 0 0; }
.btn { width: 98px; height: 33px; border-radius: 3px; background: #fff; border: 1px solid #ddd; text-align: center; line-height: 31px; font-size: 15px; color: #444; }
.pri { background: #2b7cdc; border-color: #2b7cdc; color: #fff; }

.wl { stroke: #ddd; stroke-width: 3; fill: none; }
.rl { stroke: #f00; stroke-width: 6; fill: none; }
.rl2 { stroke: #e00; stroke-width: 5; fill: none; }
.rl3 { stroke: #e00; stroke-width: 4; fill: none; }
.ml { stroke: #f0f; stroke-width: 6; fill: none; }
.gl { stroke: #0f0; stroke-width: 5; fill: none; }
.yl2 { stroke: #ff0; stroke-width: 5; fill: none; }
.yl3 { stroke: #ff0; stroke-width: 5; fill: none; }
.cl { stroke: #0ff; stroke-width: 5; fill: none; }
.cl2 { stroke: #0ff; stroke-width: 4; fill: none; }
.dots-c { stroke: #0ff; stroke-width: 8; stroke-linecap: round; fill: none; }
.dots-y { stroke: #fc0; stroke-width: 8; stroke-linecap: round; fill: none; }
.dots-g { stroke: #2e2; stroke-width: 8; stroke-linecap: round; fill: none; }
.cw { fill: #d8d8d8; font-family: "Noto Sans CJK SC", sans-serif; }
.cg { fill: #0c0; font-family: "Liberation Sans", sans-serif; }
.s26 { font-size: 28px; }
.s30 { font-size: 30px; }
.s36 { font-size: 36px; }
.s56 { font-size: 58px; }
.s81 { font-size: 80px; font-weight: 300; }
.big75 { font-size: 76px; font-weight: 300; }
.one { font: 83px "Liberation Serif", serif; }
.one2 { font: 105px "Liberation Serif", serif; }

.rbox { position: absolute; border: 7px solid #f5353a; }
.rb1 { left: 19px; top: 773px; width: 149px; height: 54px; }
.rb2 { left: 228px; top: 284px; width: 112px; height: 151px; }
.rb3 { left: 381px; top: 235px; width: 161px; height: 137px; }
.rb4 { left: 1397px; top: 172px; width: 144px; height: 56px; }
.rb5 { left: 805px; top: 620px; width: 387px; height: 326px; }
.arrows { position: absolute; left: 0; top: 0; pointer-events: none; }
.arrows polygon { fill: #f5353a; }
```
